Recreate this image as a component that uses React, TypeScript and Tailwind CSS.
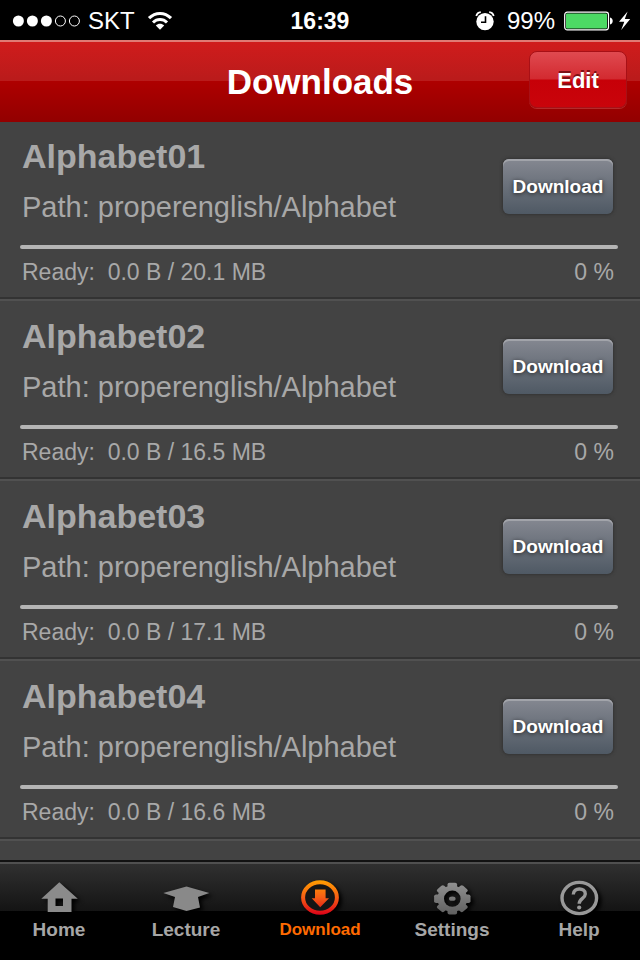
import { ReactNode } from 'react';

type Lesson = {
  name: string;
  path: string;
  size: string;
};

type TabProps = {
  label: string;
  active?: boolean;
  children: ReactNode;
};

const lessons: Lesson[] = [
  { name: 'Alphabet01', path: 'properenglish/Alphabet', size: '20.1 MB' },
  { name: 'Alphabet02', path: 'properenglish/Alphabet', size: '16.5 MB' },
  { name: 'Alphabet03', path: 'properenglish/Alphabet', size: '17.1 MB' },
  { name: 'Alphabet04', path: 'properenglish/Alphabet', size: '16.6 MB' }
];

const StatusBar = () => (
  <div className="grid h-10 shrink-0 grid-cols-[1fr_auto_1fr] items-center bg-black px-2 pt-px text-[24px] leading-7 text-white">
    <div className="flex items-center">
      <svg width="78" height="14" viewBox="0 0 78 14" aria-hidden="true">
        {[10, 24, 38].map((x) => (
          <circle key={x} cx={x + 0.4} cy="7" r="5.5" fill="white" />
        ))}
        {[52, 66].map((x) => (
          <circle
            key={x}
            cx={x + 0.4}
            cy="7"
            r="5"
            fill="none"
            stroke="white"
          />
        ))}
      </svg>
      <span className="ml-0.5">SKT</span>
      <svg
        className="ml-3"
        width="26"
        height="20"
        viewBox="0 0 26 20"
        fill="none"
        stroke="white"
        aria-hidden="true"
      >
        <path d="M2 7.2C8.4 .9 17.6 .9 24 7.2" strokeWidth="3.2" />
        <path d="M6 11.5C10 7.6 16 7.6 20 11.5" strokeWidth="3" />
        <path
          d="M13 18.7L8.8 14.4C11.2 12.3 14.8 12.3 17.2 14.4Z"
          fill="white"
          stroke="none"
        />
      </svg>
    </div>
    <span className="text-[23px] font-bold">16:39</span>
    <div className="flex items-center justify-end">
      <svg width="20" height="20" viewBox="0 0 20 20" aria-hidden="true">
        <circle cx="10" cy="10.6" r="8.7" fill="white" />
        <path
          d="M1.3 5C1.8 2.8 3.6 1.3 5.8 1.1M18.7 5C18.2 2.8 16.4 1.3 14.2 1.1"
          fill="none"
          stroke="white"
          strokeWidth="1.8"
        />
        <path
          d="M10.5 5.2V11.2H6"
          fill="none"
          stroke="black"
          strokeWidth="1.6"
        />
      </svg>
      <span className="ml-3">99%</span>
      <svg
        className="ml-[9px]"
        width="50"
        height="20"
        viewBox="0 0 50 20"
        aria-hidden="true"
      >
        <rect
          x="0.7"
          y="1.2"
          width="43.8"
          height="17.6"
          rx="2.5"
          fill="none"
          stroke="white"
          strokeWidth="1.2"
        />
        <rect x="2" y="2.5" width="41" height="15" rx="1" fill="#4cd964" />
        <path d="M46 6.500C49.6 7 49.6 13 46 13.5Z" fill="white" />
      </svg>
      <svg
        className="ml-1"
        width="14"
        height="20"
        viewBox="0 0 14 20"
        aria-hidden="true"
      >
        <path d="M9.600 0.500L1 10.700H6.300L3.200 18.900L12.200 8.100H6.800Z" fill="white" />
      </svg>
    </div>
  </div>
);

const Header = () => (
  <header className="relative z-10 grid shrink-0 grid-cols-[1fr_auto_1fr] items-center border-t-2 border-[#e07a74] bg-[linear-gradient(#d01c1c,#b91b1b_49%,#ae0000_49%,#920000)] px-[13px] pt-[9px] pb-[14px] text-white">
    <h1 className="col-start-2 pt-1 text-[35px] leading-[44px] font-bold">
      Downloads
    </h1>
    <button
      type="button"
      className="h-[57px] w-[98px] cursor-pointer justify-self-end rounded-lg border border-[#a81016] bg-[linear-gradient(#e04a50,#d22a30_49%,#c70008_51%,#c9040b)] pt-[3px] text-[22px] leading-6 font-bold shadow-[0_1px_0_#b52a2a] [text-shadow:0_-2px_0_#7d1014]"
    >
      Edit
    </button>
  </header>
);

const LessonRow = ({ name, path, size }: Lesson) => (
  <li className="border-t-2 border-b-2 border-t-[#515151] border-b-[#333333] pt-[15px] pr-[22px] pb-[11px] pl-5">
    <div className="flex items-center justify-between">
      <div className="pl-0.5">
        <h2 className="text-[34px] leading-10 font-bold">{name}</h2>
        <p className="mt-[15px] text-[29px] leading-8">Path: {path}</p>
      </div>
      <button
        type="button"
        aria-label={`Download ${name}`}
        className="mt-[14px] mr-[5px] h-[55px] w-[110px] cursor-pointer rounded-md bg-linear-to-b from-[#858891] to-[#4f5964] text-[19px] leading-6 font-bold text-white shadow-[inset_0_2px_0_#a2a4aa,0_0_3px_1px_#333333] [text-shadow:0_1px_4px_#222222]"
      >
        Download
      </button>
    </div>
    <div
      role="progressbar"
      aria-label={name}
      aria-valuenow={0}
      className="mt-[22px] h-1 rounded-full bg-[#b5b5b5]"
    />
    <div className="mt-[9px] flex justify-between pr-1 pl-0.5 text-[23px] leading-7">
      <span className="whitespace-pre">{`Ready:  0.0 B / ${size}`}</span>
      <span>0 %</span>
    </div>
  </li>
);

const Tab = ({ label, active, children }: TabProps) => (
  <a
    href="#"
    aria-current={active ? 'page' : undefined}
    className={`flex flex-col items-center pt-4 leading-6 font-bold ${
      active ? 'text-[17px] text-[#ff6a00]' : 'text-[19px] text-[#a6a6a6]'
    }`}
  >
    <svg
      className="mb-[2px] overflow-visible drop-shadow-[3px_3px_2px_#000000]"
      width="48"
      height="36"
      viewBox="0 0 48 36"
      aria-hidden="true"
    >
      {children}
    </svg>
    {label}
  </a>
);

const TabBar = () => (
  <nav className="relative z-10 shrink-0 border-t-2 border-[#121212] bg-black">
    <div className="grid grid-cols-[118fr_136fr_132fr_132fr_122fr] border-t-2 border-[#505050] bg-[linear-gradient(#303030,#141414_47px,#000000_47px)] pb-[18px]">
      <Tab label="Home">
        <path
          d="M24.3 2.3L42.8 18.7H36.5V32H12.7V18.7H6.3ZM20.5 18.5V26H28V18.5Z"
          fill="#8b8b8b"
          fillRule="evenodd"
        />
      </Tab>
      <Tab label="Lecture">
        <path
          d="M24.5 6.5L47.3 13L36 17L38 27.5L24.5 31L11 27L13 17L1.3 13Z"
          fill="#898989"
        />
      </Tab>
      <Tab label="Download" active>
        <defs>
          <linearGradient
            id="flame"
            gradientUnits="userSpaceOnUse"
            x1="0"
            y1="0"
            x2="0"
            y2="35"
          >
            <stop offset="0" stopColor="#ffa000" />
            <stop offset="0.5" stopColor="#f65d15" />
            <stop offset="1" stopColor="#dc0018" />
          </linearGradient>
        </defs>
        <ellipse
          cx="24"
          cy="17.5"
          rx="16.9"
          ry="15.3"
          fill="#151515"
          stroke="url(#flame)"
          strokeWidth="4"
        />
        <path
          d="M19 9.5H29.6V18.3H33L24.2 27.3L15.7 18.3H19Z"
          fill="url(#flame)"
        />
      </Tab>
      <Tab label="Settings">
        <defs>
          <linearGradient
            id="steel"
            gradientUnits="userSpaceOnUse"
            x1="0"
            y1="3"
            x2="0"
            y2="34"
          >
            <stop offset="0" stopColor="#909090" />
            <stop offset="1" stopColor="#606060" />
          </linearGradient>
          <mask id="gear">
            <g transform="translate(24.3 18.7) scale(1 0.87)" fill="white">
              <circle r="15" />
              {[0, 45, 90, 135].map((angle) => (
                <rect
                  key={angle}
                  x="-4.8"
                  y="-18.2"
                  width="9.6"
                  height="36.4"
                  rx="2"
                  transform={`rotate(${angle})`}
                />
              ))}
              <ellipse rx="8.3" ry="9.3" fill="black" />
              <ellipse rx="3.3" ry="2.5" />
            </g>
          </mask>
        </defs>
        <rect width="48" height="36" fill="url(#steel)" mask="url(#gear)" />
      </Tab>
      <Tab label="Help">
        <ellipse
          cx="24.3"
          cy="18"
          rx="17.3"
          ry="15.6"
          fill="#181818"
          stroke="#999999"
          strokeWidth="3.4"
        />
        <path
          d="M18.3 14.5C18 7.3 30.600 7.3 30.3 14C30.2 18.3 24.2 18.5 24.2 23.8"
          fill="none"
          stroke="#999999"
          strokeWidth="3.4"
        />
        <circle cx="24.2" cy="27.5" r="2.1" fill="#999999" />
      </Tab>
    </div>
  </nav>
);

export default function App() {
  return (
    <div className="flex h-screen flex-col overflow-hidden bg-[#434343] font-['Liberation_Sans',Arial,sans-serif]">
      <StatusBar />
      <Header />
      <main className="min-h-0 flex-1 overflow-hidden text-[#a8a8a8]">
        <ul className="-mt-[3px]">
          {lessons.map((lesson) => (
            <LessonRow key={lesson.name} {...lesson} />
          ))}
          <li className="h-10 border-t-2 border-[#515151]" />
        </ul>
      </main>
      <TabBar />
    </div>
  );
}
